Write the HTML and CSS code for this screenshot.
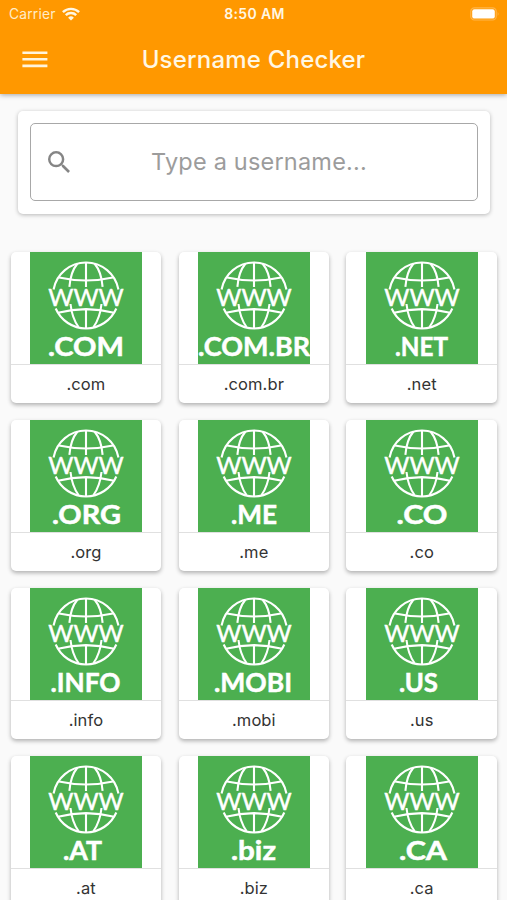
FILE: index.html
```html
<!DOCTYPE html>
<html lang="en">
<head>
<meta charset="utf-8">
<title>Username Checker</title>
<link rel="stylesheet" href="styles.css">
</head>
<body>
<svg class="defs" width="0" height="0">
  <symbol id="globe" viewBox="0 0 112 112">
    <g fill="none" stroke="#fff" stroke-width="2.1">
      <path d="M23.55 37.5A33 33 0 0 1 88.45 37.5M25.7 56.5A33 33 0 0 0 86.3 56.5"/>
      <path d="M56 10.5V35M56 57V76M29 25.5Q56 31.5 83 25.5M28 60.8Q56 53.5 84 60.8"/>
      <path d="M47.5 11.5Q40.5 20 39.4 34.8M64.5 11.5Q71.5 20 72.6 34.8M40.5 52Q42 66 48.5 75M71.5 52Q70 66 63.5 75"/>
    </g>
    <text class="www" x="18.3" y="54.1" textLength="75.4" lengthAdjust="spacingAndGlyphs">WWW</text>
  </symbol>
</svg>
<div class="app">
  <header class="top">
    <div class="status">
      <div class="carrier">Carrier
        <svg width="18" height="14" viewBox="0 0 18 14" fill="none" stroke="#fff7e3" stroke-width="2.4"><path d="M.9 5.2a11.5 11.5 0 0 1 16.2 0M3.8 8.2a7.4 7.4 0 0 1 10.4 0"/><path d="M9 13.6L6.1 10.7a4.2 4.2 0 0 1 5.8 0z" fill="#fff7e3" stroke="none"/></svg>
      </div>
      <div class="clock">8:50 AM</div>
      <svg class="battery" width="30" height="14" viewBox="0 0 30 14"><rect x=".8" y=".8" width="25.4" height="12.2" rx="3.6" fill="none" stroke="#ffb54a" stroke-width="1.2"/><rect x="2.2" y="2.2" width="22.6" height="9.4" rx="2.2" fill="#fff"/><path d="M27.7 4.8q1.8 2.1 0 4.2z" fill="#ffb54a"/></svg>
    </div>
    <div class="bar">
      <svg class="menu" width="26" height="17" viewBox="0 0 26 17" fill="#fff4dc"><path d="M.4.4h25v2.6h-25zM.4 7h25v2.6h-25zM.4 13.6h25v2.6h-25z"/></svg>
      <h1>Username Checker</h1>
    </div>
  </header>
  <section class="search">
    <div class="field">
      <svg width="22" height="22" viewBox="3 3 17.5 17.5" fill="#858585"><path d="M15.5 14h-.79l-.28-.27A6.47 6.47 0 0 0 16 9.5 6.5 6.5 0 1 0 9.5 16c1.61 0 3.09-.59 4.23-1.57l.27.28v.79l5 4.99L20.49 19l-4.99-5zm-6 0C7.01 14 5 11.99 5 9.5S7.01 5 9.5 5 14 7.01 14 9.5 11.99 14 9.5 14z"/></svg>
      <span>Type a username...</span>
    </div>
  </section>
  <main class="grid">
    <article class="card"><svg class="tile" viewBox="0 0 112 112"><use href="#globe"/><text x="18" y="103.6" textLength="76" lengthAdjust="spacingAndGlyphs">.COM</text></svg><p>.com</p></article>
    <article class="card"><svg class="tile" viewBox="0 0 112 112"><use href="#globe"/><text x="0" y="103.6" textLength="112" lengthAdjust="spacingAndGlyphs">.COM.BR</text></svg><p>.com.br</p></article>
    <article class="card"><svg class="tile" viewBox="0 0 112 112"><use href="#globe"/><text x="29" y="103.6" textLength="53" lengthAdjust="spacingAndGlyphs">.NET</text></svg><p>.net</p></article>
    <article class="card"><svg class="tile" viewBox="0 0 112 112"><use href="#globe"/><text x="22" y="103.6" textLength="69" lengthAdjust="spacingAndGlyphs">.ORG</text></svg><p>.org</p></article>
    <article class="card"><svg class="tile" viewBox="0 0 112 112"><use href="#globe"/><text x="33" y="103.6" textLength="46" lengthAdjust="spacingAndGlyphs">.ME</text></svg><p>.me</p></article>
    <article class="card"><svg class="tile" viewBox="0 0 112 112"><use href="#globe"/><text x="30.5" y="103.6" textLength="51" lengthAdjust="spacingAndGlyphs">.CO</text></svg><p>.co</p></article>
    <article class="card"><svg class="tile" viewBox="0 0 112 112"><use href="#globe"/><text x="20.5" y="103.6" textLength="70" lengthAdjust="spacingAndGlyphs">.INFO</text></svg><p>.info</p></article>
    <article class="card"><svg class="tile" viewBox="0 0 112 112"><use href="#globe"/><text x="16" y="103.6" textLength="78" lengthAdjust="spacingAndGlyphs">.MOBI</text></svg><p>.mobi</p></article>
    <article class="card"><svg class="tile" viewBox="0 0 112 112"><use href="#globe"/><text x="33" y="103.6" textLength="39" lengthAdjust="spacingAndGlyphs">.US</text></svg><p>.us</p></article>
    <article class="card"><svg class="tile" viewBox="0 0 112 112"><use href="#globe"/><text x="33" y="103.6" textLength="39" lengthAdjust="spacingAndGlyphs">.AT</text></svg><p>.at</p></article>
    <article class="card"><svg class="tile" viewBox="0 0 112 112"><use href="#globe"/><text x="33" y="103.6" textLength="45" lengthAdjust="spacingAndGlyphs">.biz</text></svg><p>.biz</p></article>
    <article class="card"><svg class="tile" viewBox="0 0 112 112"><use href="#globe"/><text x="33" y="103.6" textLength="48" lengthAdjust="spacingAndGlyphs">.CA</text></svg><p>.ca</p></article>
  </main>
</div>
</body>
</html>
```
FILE: styles.css
```css
* { box-sizing: border-box; }
html, body { margin: 0; height: 100%; overflow: hidden; }
body { background: #fafafa; font-family: Inter, sans-serif; color: #333; }
.defs { display: block; }
.app { height: 900px; overflow: hidden; }

.top {
  height: 94px;
  background: #ff9800;
  color: #fff7e3;
  box-shadow: 0 1px 5px rgba(0, 0, 0, .35);
}
.status {
  height: 27px;
  padding: 0 7px 0 9px;
  display: grid;
  grid-template-columns: 1fr auto 1fr;
  align-items: center;
  font-size: 13.8px;
}
.carrier { display: flex; align-items: center; gap: 6px; letter-spacing: .2px; color: #ffecc8; }
.clock { font-weight: 600; font-size: 14px; letter-spacing: .35px; }
.battery { justify-self: end; }
.bar {
  height: 65px;
  padding: 0 22px;
  display: grid;
  grid-template-columns: 1fr auto 1fr;
  align-items: center;
}
.bar h1 { margin: 0; font-size: 24px; font-weight: 500; letter-spacing: .2px; }

.search {
  margin: 17px 17px 0 18px;
  height: 102.5px;
  padding: 12px;
  background: #fff;
  border-radius: 5px;
  box-shadow: 0 1px 4px rgba(0, 0, 0, .27);
}
.field {
  height: 78px;
  border: 1.5px solid #a8a8a8;
  border-radius: 5px;
  padding: 0 17px;
  display: grid;
  grid-template-columns: 22px 1fr;
  align-items: center;
  color: #9c9c9c;
  font-size: 23.5px;
}
.field svg { margin-bottom: 1px; }
.field span { text-align: center; padding: 0 12px 2px 0; letter-spacing: .2px; }

.grid {
  margin: 38.8px 9.5px 0 10.7px;
  display: grid;
  grid-template-columns: repeat(3, 150.5px);
  grid-auto-rows: 151px;
  gap: 16.8px 17.4px;
}
.card {
  background: #fff;
  border-radius: 5px;
  box-shadow: 0 2px 4px rgba(0, 0, 0, .3);
  display: flex;
  flex-direction: column;
  align-items: center;
}
.tile { display: block; width: 112px; height: 112px; background: #4caf50; flex: none; }
.tile text { font-family: Lato, sans-serif; font-weight: 700; font-size: 26px; fill: #fff; stroke: #fff; stroke-width: .5px; }
.www { font-family: Lato, sans-serif; font-weight: 400; font-size: 23px; fill: #fff; stroke: #fff; stroke-width: .4px; }
.card p {
  margin: 0;
  align-self: stretch;
  flex: 1;
  border-top: 1.5px solid #e0e0e0;
  text-align: center;
  font-size: 16.5px;
  line-height: 39px;
  letter-spacing: .1px;
}
```
